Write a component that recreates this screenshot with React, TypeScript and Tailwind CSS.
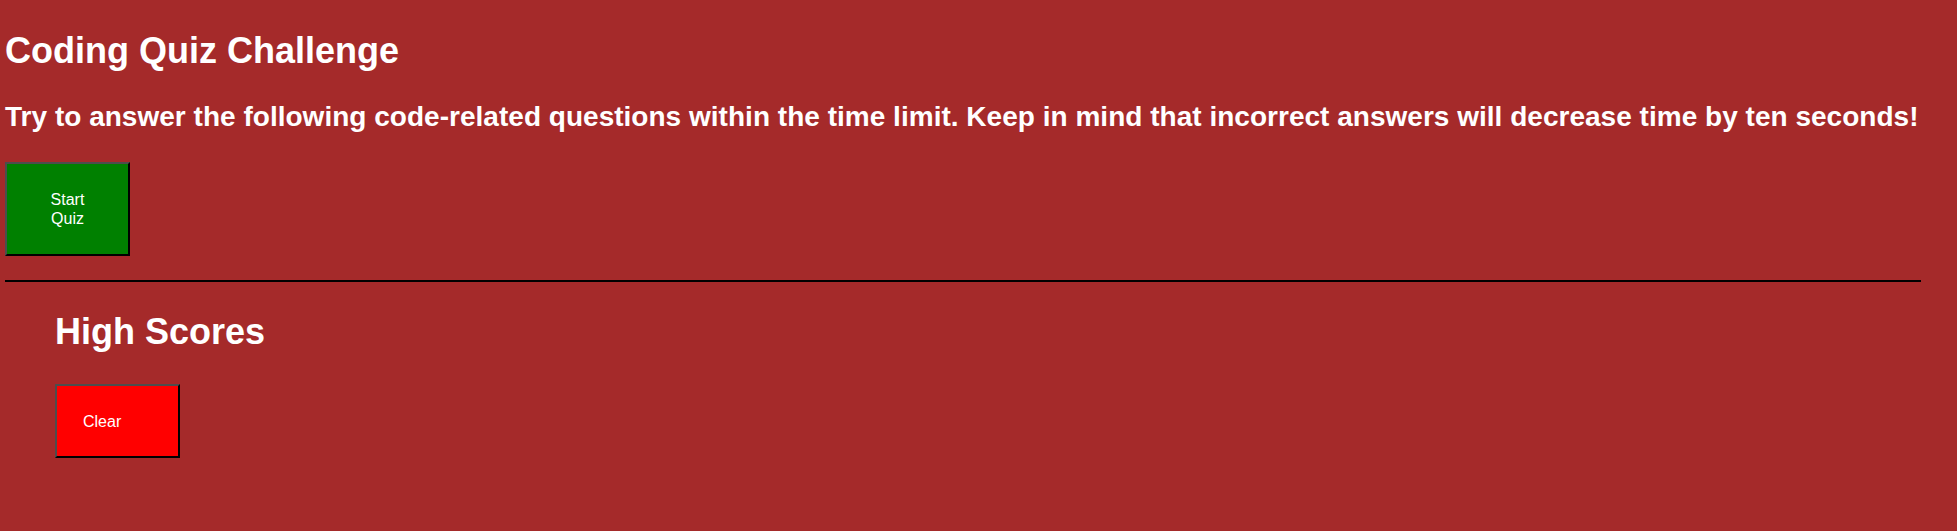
export default function App() {
  return (
    <div className="min-h-[531px] w-full bg-[#a52a2a] text-white font-['Liberation_Sans',Arial,sans-serif]">
      <header className="pl-[5px] pt-[30px]">
        <h1 className="text-[36px] leading-[41px] font-bold">Coding Quiz Challenge</h1>
        <h2 className="mt-[30px] text-[28px] leading-[32px] font-bold whitespace-nowrap tracking-[0.02px]">
          Try to answer the following code-related questions within the time limit. Keep in mind that incorrect answers will decrease time by ten seconds!
        </h2>
        <button className="mt-[29px] flex h-[94px] w-[125px] items-center justify-center border-2 border-t-[#4d4d4d] border-l-[#4d4d4d] border-r-black border-b-black bg-[#008000] px-[35px] text-center text-[16px] leading-[19px]">
          Start Quiz
        </button>
      </header>

      <hr className="ml-[5px] mt-[24px] w-[1916px] border-t-2 border-black" />

      <section className="pl-[55px] pt-[29px]">
        <h2 className="text-[36px] leading-[41px] font-bold">High Scores</h2>
        <button className="mt-[32px] flex h-[74px] w-[125px] items-center border-2 border-t-[#4d4d4d] border-l-[#4d4d4d] border-r-black border-b-black bg-[#ff0000] pl-[26px] text-[16px] leading-[19px]">
          Clear
        </button>
      </section>
    </div>
  );
}
